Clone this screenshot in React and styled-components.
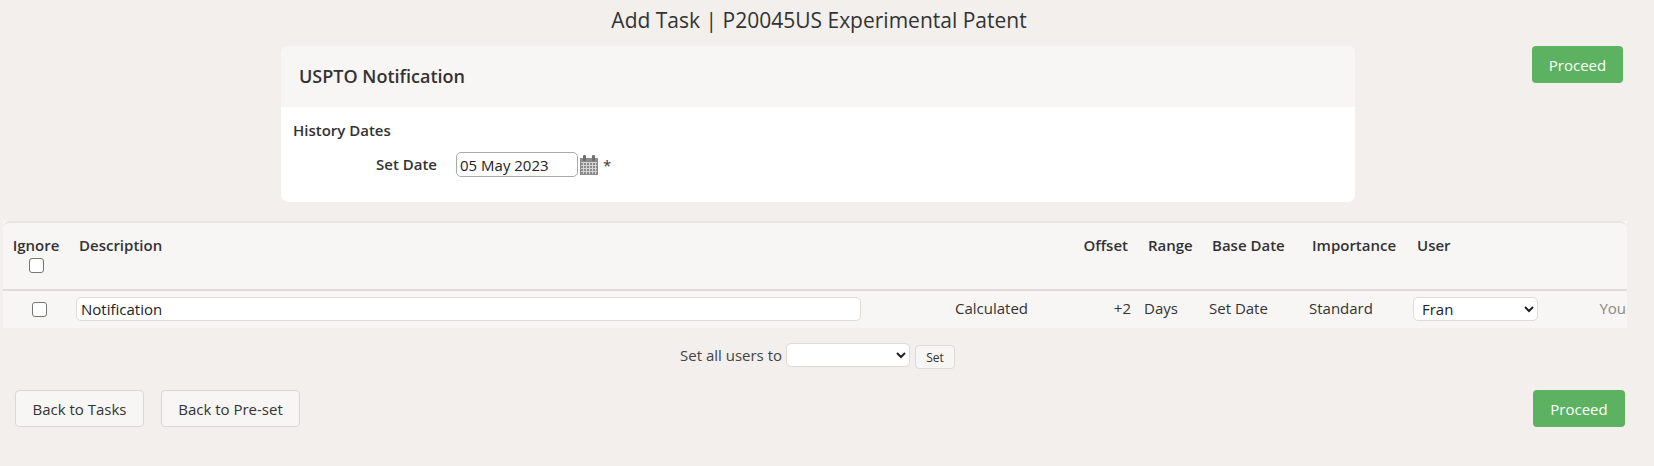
import React from "react";
import styled, { createGlobalStyle } from "styled-components";

const Global = createGlobalStyle`
  body {
    margin: 0;
    background: #f2efec;
    color: #333;
    font-family: "Open Sans", "Liberation Sans", sans-serif;
    font-size: 15px;
  }
`;
const Page = styled.div`
  width: 1654px;
  height: 466px;
  overflow: hidden;
`;
const Title = styled.h1`
  margin: 0;
  height: 46px;
  padding-top: 5px;
  box-sizing: border-box;
  font-size: 21px;
  line-height: 30px;
  font-weight: 400;
  text-align: center;
  width: 1638px;
`;
const Top = styled.div`
  display: flex;
  align-items: flex-start;
  padding-left: 281px;
  height: 175px;
`;
const Card = styled.section`
  width: 1074px;
  height: 156px;
  background: #fff;
  border-radius: 7px;
  overflow: hidden;
`;
const CardHead = styled.h2`
  margin: 0;
  height: 61px;
  padding: 0 18px;
  background: #f8f6f4;
  font-size: 18px;
  font-weight: 600;
  line-height: 61px;
`;
const CardBody = styled.div`
  padding: 13px 12px;
`;
const SectionName = styled.div`
  font-weight: 600;
  line-height: 20px;
`;
const DateRow = styled.div`
  display: flex;
  align-items: center;
  margin-top: 12px;
`;
const DateLabel = styled.label`
  width: 163px;
  padding-right: 19px;
  box-sizing: border-box;
  text-align: right;
  font-weight: 600;
  position: relative;
  top: -1px;
`;
const TextInput = styled.input`
  box-sizing: border-box;
  height: ${(p) => p.$h}px;
  width: ${(p) => p.$w}px;
  padding: 1px ${(p) => p.$pad}px;
  border: 1px solid ${(p) => p.$line};
  border-radius: 5px;
  background: #fff;
  color: #222;
  font: 15px "Open Sans", sans-serif;
  outline: none;
`;
const Required = styled.span`
  margin-left: 5px;
  font-size: 15px;
`;
const Proceed = styled.button`
  box-sizing: border-box;
  width: ${(p) => p.$w}px;
  height: 37px;
  margin-left: ${(p) => p.$left}px;
  border: none;
  border-radius: 4px;
  background: #5cb260;
  color: #fff;
  font: 15px "Open Sans", sans-serif;
`;
const Table = styled.table`
  width: 1624px;
  margin-left: 3px;
  border-collapse: separate;
  border-spacing: 0;
  table-layout: fixed;
  background: #f8f6f4;
`;
const Th = styled.th`
  height: 70px;
  box-sizing: border-box;
  padding: 12px ${(p) => p.$right || 0}px 0 ${(p) => p.$left || 0}px;
  border-top: 2px solid #e8e5e2;
  border-bottom: 2px solid #dedbd8;
  vertical-align: top;
  text-align: ${(p) => p.$align || "left"};
  font-size: 15px;
  font-weight: 600;
  line-height: 20px;
  &:first-child { border-top-left-radius: 7px; }
  &:last-child { border-top-right-radius: 7px; }
`;
const Td = styled.td`
  height: 37px;
  box-sizing: border-box;
  padding: 0 ${(p) => p.$right || 0}px 1px ${(p) => p.$left || 0}px;
  text-align: ${(p) => p.$align || "left"};
  color: ${(p) => p.$color || "#333"};
  font-size: 15px;
  vertical-align: middle;
`;
const CellText = styled.span`
  position: relative;
  top: -1px;
`;
const Check = styled.input.attrs({ type: "checkbox" })`
  appearance: none;
  display: block;
  box-sizing: border-box;
  width: 15px;
  height: 15px;
  margin: ${(p) => p.$margin};
  border: 1.5px solid #767676;
  border-radius: 3px;
  background: #fff;
`;
const Select = styled.select`
  box-sizing: border-box;
  display: block;
  width: ${(p) => p.$w}px;
  height: 24px;
  padding: 0 4px;
  border: 1px solid #dedbd8;
  border-radius: 5px;
  background: #fff;
  color: #222;
  font: 15px "Open Sans", sans-serif;
`;
const SetRow = styled.div`
  display: flex;
  align-items: center;
  justify-content: center;
  height: 24px;
  margin-top: 15px;
  width: 1635px;
  color: #444;
`;
const SetButton = styled.button`
  box-sizing: border-box;
  width: 40px;
  height: 24px;
  margin-left: 5px;
  position: relative;
  top: 2px;
  border: 1px solid #dedbd8;
  border-radius: 4px;
  background: #f8f6f4;
  color: #333;
  font: 12px "Open Sans", sans-serif;
`;
const SetLabel = styled.span`
  margin-right: 4px;
`;
const Footer = styled.div`
  display: flex;
  margin-top: 23px;
  padding-left: 15px;
`;
const Back = styled.button`
  box-sizing: border-box;
  width: ${(p) => p.$w}px;
  height: 37px;
  margin-right: 17px;
  border: 1px solid #dad7d4;
  border-radius: 4px;
  background: #f8f6f4;
  color: #333;
  font: 15px "Open Sans", sans-serif;
`;
const CalSvg = styled.svg`
  margin-left: 2px;
  flex: none;
`;

function CalendarIcon() {
  return (
    <CalSvg width="18" height="20" viewBox="0 0 18 20">
      <rect x="0" y="3" width="18" height="17" fill="#8b8b8b" />
      <rect x="3" y="0" width="3" height="6" rx="1.2" fill="#6f6f6f" />
      <rect x="12" y="0" width="3" height="6" rx="1.2" fill="#6f6f6f" />
      <path
        d="M1 7.5h16M1 10.5h16M1 13.5h16M1 16.5h16M3.5 7v12M6.5 7v12M9.5 7v12M12.5 7v12M15.5 7v12"
        stroke="#d4d4d4"
        strokeWidth="1"
        fill="none"
      />
    </CalSvg>
  );
}

const App = () => (
  <Page>
    <Global />
    <Title>Add Task | P20045US Experimental Patent</Title>
    <Top>
      <Card>
        <CardHead>USPTO Notification</CardHead>
        <CardBody>
          <SectionName>History Dates</SectionName>
          <DateRow>
            <DateLabel>Set Date</DateLabel>
            <TextInput defaultValue="05 May 2023" $w={122} $h={25} $line="#aaa" $pad={3} />
            <CalendarIcon />
            <Required>*</Required>
          </DateRow>
        </CardBody>
      </Card>
      <Proceed $w={91} $left={177}>Proceed</Proceed>
    </Top>
    <Table>
      <colgroup>
        <col width="68" />
        <col width="879" />
        <col width="120" />
        <col width="70" />
        <col width="64" />
        <col width="100" />
        <col width="105" />
        <col width="181" />
        <col width="37" />
      </colgroup>
      <thead>
        <tr>
          <Th $align="center" $right={2}>
            Ignore
            <Check $margin="3px auto 0 26px" />
          </Th>
          <Th $left={8}>Description</Th>
          <Th />
          <Th $align="right" $right={12}>Offset</Th>
          <Th $left={8}>Range</Th>
          <Th $left={8}>Base Date</Th>
          <Th $left={8}>Importance</Th>
          <Th $left={8}>User</Th>
          <Th />
        </tr>
      </thead>
      <tbody>
        <tr>
          <Td><Check $margin="0 0 0 29px" /></Td>
          <Td $left={5}><TextInput defaultValue="Notification" $w={785} $h={24} $line="#dedbd8" $pad={4} /></Td>
          <Td $left={5}><CellText>Calculated</CellText></Td>
          <Td $align="right" $right={9}><CellText>+2</CellText></Td>
          <Td $left={4}><CellText>Days</CellText></Td>
          <Td $left={5}><CellText>Set Date</CellText></Td>
          <Td $left={5}><CellText>Standard</CellText></Td>
          <Td $left={4}><Select $w={125} defaultValue="Fran"><option>Fran</option></Select></Td>
          <Td $align="right" $right={1} $color="#888"><CellText>You</CellText></Td>
        </tr>
      </tbody>
    </Table>
    <SetRow>
      <SetLabel>Set all users to</SetLabel>
      <Select $w={124}><option></option></Select>
      <SetButton>Set</SetButton>
    </SetRow>
    <Footer>
      <Back $w={129}>Back to Tasks</Back>
      <Back $w={139}>Back to Pre-set</Back>
      <Proceed $w={92} $left={1216}>Proceed</Proceed>
    </Footer>
  </Page>
);

export default App;
